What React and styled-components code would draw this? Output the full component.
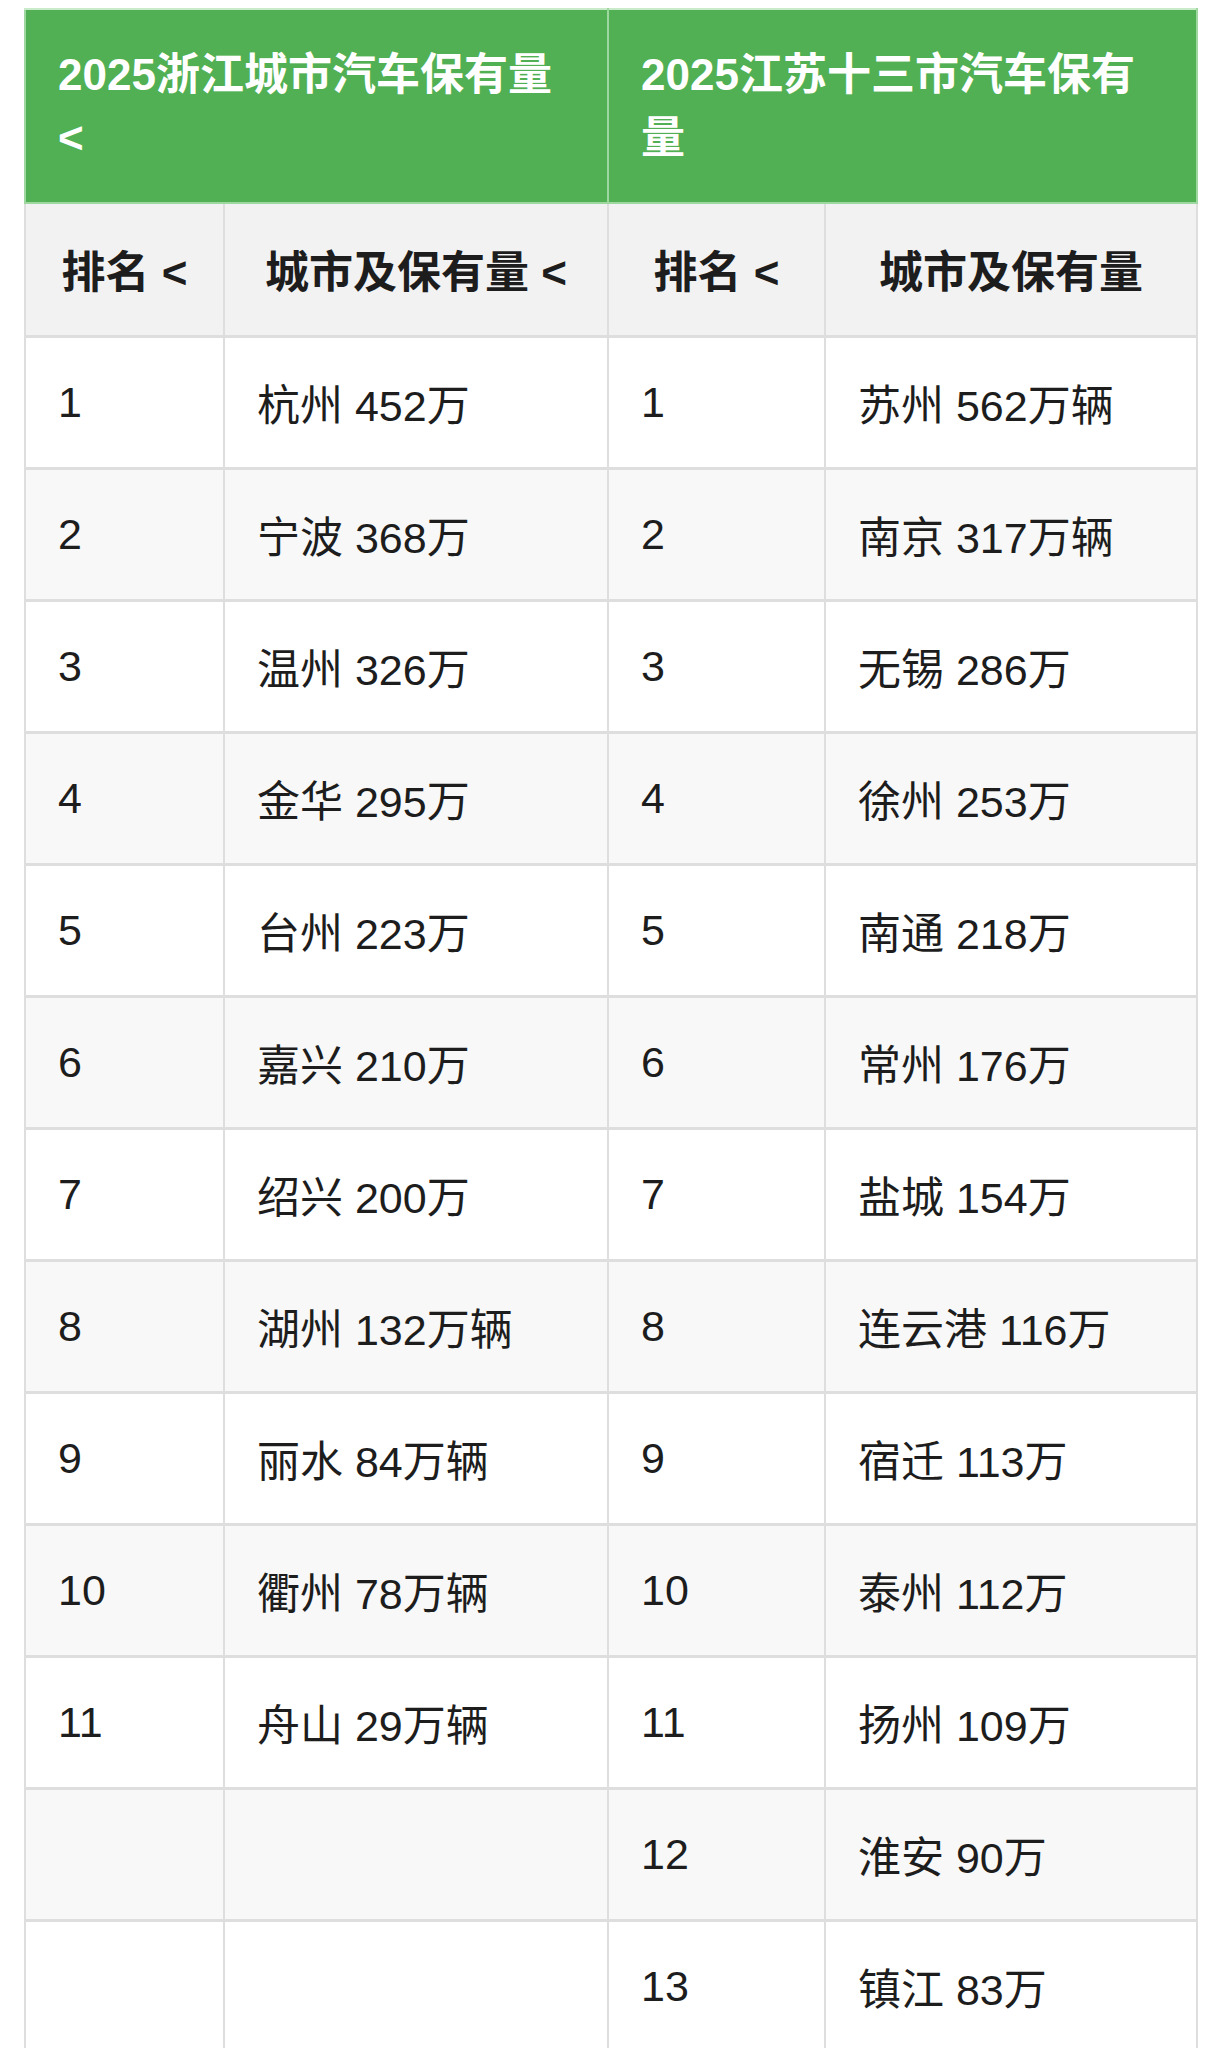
import React from 'react';
import { styled, createGlobalStyle } from 'styled-components';

const GlobalStyle = createGlobalStyle`
    html, body {
        margin: 0;
        padding: 0;
        background: #fff;
    }
    body {
        font-family: "Liberation Sans", "Noto Sans CJK SC", sans-serif;
        color: #1d1d1d;
    }
`

const zhejiang = [
    ['1', '杭州 452万'],
    ['2', '宁波 368万'],
    ['3', '温州 326万'],
    ['4', '金华 295万'],
    ['5', '台州 223万'],
    ['6', '嘉兴 210万'],
    ['7', '绍兴 200万'],
    ['8', '湖州 132万辆'],
    ['9', '丽水 84万辆'],
    ['10', '衢州 78万辆'],
    ['11', '舟山 29万辆'],
    ['', ''],
    ['', ''],
]

const jiangsu = [
    ['1', '苏州 562万辆'],
    ['2', '南京 317万辆'],
    ['3', '无锡 286万'],
    ['4', '徐州 253万'],
    ['5', '南通 218万'],
    ['6', '常州 176万'],
    ['7', '盐城 154万'],
    ['8', '连云港 116万'],
    ['9', '宿迁 113万'],
    ['10', '泰州 112万'],
    ['11', '扬州 109万'],
    ['12', '淮安 90万'],
    ['13', '镇江 83万'],
]

function App() {
    return (
        <>
            <GlobalStyle />
            <Page>
                <Table>
                    <colgroup>
                        <col style={{ width: 199 }} />
                        <col style={{ width: 384 }} />
                        <col style={{ width: 217 }} />
                        <col style={{ width: 372 }} />
                    </colgroup>
                    <thead>
                        <tr>
                            <TitleCell colSpan={2}>2025浙江城市汽车保有量 &lt;</TitleCell>
                            <TitleCell colSpan={2}>2025江苏十三市汽车保有量</TitleCell>
                        </tr>
                        <tr>
                            <HeadCell>排名 &lt;</HeadCell>
                            <HeadCell>城市及保有量 &lt;</HeadCell>
                            <HeadCell>排名 &lt;</HeadCell>
                            <HeadCell>城市及保有量</HeadCell>
                        </tr>
                    </thead>
                    <tbody>
                        {jiangsu.map((row, i) => (
                            <Row key={i} $striped={i % 2 === 1}>
                                <Cell>{zhejiang[i][0]}</Cell>
                                <Cell>{zhejiang[i][1]}</Cell>
                                <Cell>{row[0]}</Cell>
                                <Cell>{row[1]}</Cell>
                            </Row>
                        ))}
                    </tbody>
                </Table>
            </Page>
        </>
    );
}

const Page = styled.div`
    padding: 8px 24px 0;
`

const Table = styled.table`
    width: 1172px;
    table-layout: fixed;
    border-collapse: collapse;
    font-size: 43px;
`

const TitleCell = styled.th`
    height: 194px;
    box-sizing: border-box;
    padding: 0 32px;
    background: #51b053;
    border: 2px solid #9ed79f;
    border-top-color: #c9ebc9;
    color: #fff;
    font-size: 44px;
    font-weight: 700;
    line-height: 63px;
    text-align: left;
    vertical-align: middle;
`

const HeadCell = styled.th`
    height: 133px;
    box-sizing: border-box;
    padding: 0 10px;
    background: #f2f2f2;
    border: 2px solid #dedede;
    border-top: none;
    font-size: 44px;
    font-weight: 700;
    text-align: center;
    white-space: nowrap;
`

const Row = styled.tr`
    background: ${(p) => (p.$striped ? '#f8f8f8' : '#ffffff')};
`

const Cell = styled.td`
    height: 132px;
    box-sizing: border-box;
    padding: 0 32px;
    border: 2px solid #dedede;
    border-top-width: 3px;
    white-space: nowrap;
    vertical-align: middle;
`

export default App;
